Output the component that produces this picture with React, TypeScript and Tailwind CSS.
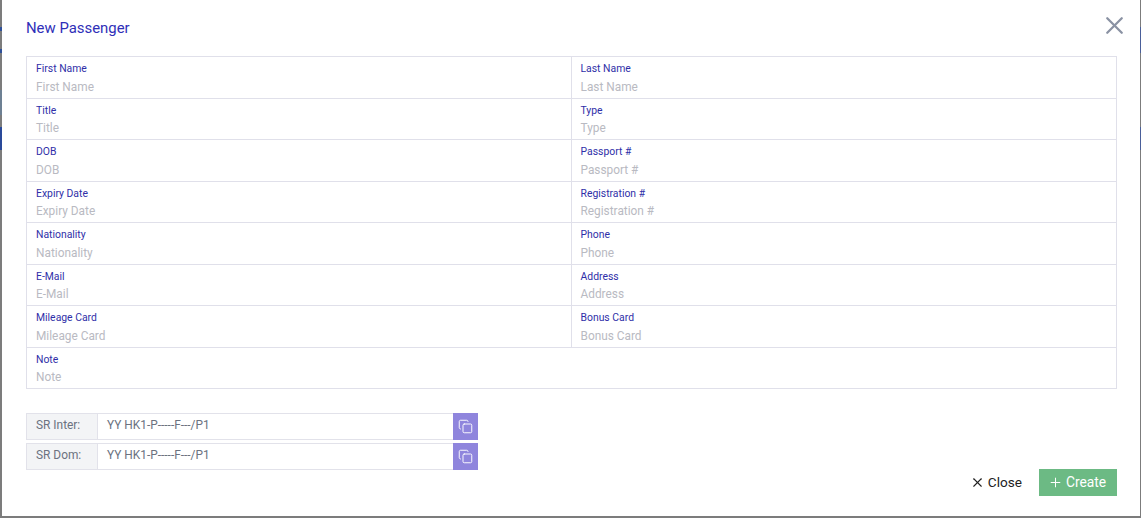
import React from "react";
import { Copy, X, Plus } from "lucide-react";

const rows: [string, string?][] = [
  ["First Name", "Last Name"],
  ["Title", "Type"],
  ["DOB", "Passport #"],
  ["Expiry Date", "Registration #"],
  ["Nationality", "Phone"],
  ["E-Mail", "Address"],
  ["Mileage Card", "Bonus Card"],
  ["Note"],
];

function Cell({ label, last, full }: { label: string; last?: boolean; full?: boolean }) {
  return (
    <div className={`flex h-full flex-col pl-[9px] ${full ? "w-full" : "w-1/2"} ${last ? "" : "border-r border-[#e0e0ea]"}`}>
      <div className="mt-[4px] h-[15px] text-[10.4px] leading-[15px] text-[#2f2fa8]">{label}</div>
      <div className="mt-[1.5px] h-[18px] text-[11.85px] leading-[18px] text-[#b9bac2]">{label}</div>
    </div>
  );
}

function SrRow({ label }: { label: string }) {
  return (
    <div className="flex h-[27px] w-[452px] border border-r-0 border-[#e2e2ea]">
      <div className="flex w-[71px] shrink-0 items-center border-r border-[#e2e2ea] bg-[#f3f4f6] pl-[9px] text-[11.9px] text-[#6b7280]">{label}</div>
      <div className="flex flex-1 items-center bg-white pl-[9px] text-[11.9px] text-[#6b7280]">YY HK1-P-----F---/P1</div>
      <div className="-my-px flex w-[25px] shrink-0 items-center justify-center bg-[#8f85dd] text-white">
        <Copy size={15} strokeWidth={1.5} />
      </div>
    </div>
  );
}

export default function App() {
  return (
    <div className="flex h-[518px] w-[1141px] bg-[#7c7c7c] pb-[2px] font-['Roboto',sans-serif]">
      <div className="flex w-[2px] shrink-0 flex-col">
        <div className="mt-[27px] h-[4px] bg-[#2f5199]" />
        <div className="mt-[18px] h-[4px] bg-[#2f5199]" />
        <div className="mt-[37px] h-[25px] bg-[#6d8093]" />
        <div className="mt-[12px] h-[23px] bg-[#2a4a9a]" />
      </div>
      <div className="flex h-full min-w-0 flex-1 flex-col bg-white pl-[24px] pr-[23px]">
        <div className="flex h-[56px] shrink-0 items-start justify-between">
          <div className="mt-[19px] text-[14.9px] leading-[18px] text-[#2f2fb8]">New Passenger</div>
          <X size={29} strokeWidth={1.9} className="-mr-[12px] mt-[11px] text-[#8a92a3]" />
        </div>
        <div className="border border-[#e0e0ea]">
          {rows.map((r, i) => (
            <div key={i} className={`flex ${i < rows.length - 1 ? "h-[41.5px] border-b border-[#e0e0ea]" : "h-[40.5px]"}`}>
              <Cell label={r[0]} full={!r[1]} last={!r[1]} />
              {r[1] && <Cell label={r[1]} last />}
            </div>
          ))}
        </div>
        <div className="mt-[23.5px] flex flex-col gap-[3px]">
          <SrRow label="SR Inter:" />
          <SrRow label="SR Dom:" />
        </div>
        <div className="-mt-[0.5px] flex items-center justify-end gap-[17px]">
          <div className="flex items-center gap-[3px] text-[13.6px] text-[#222222]">
            <X size={15} strokeWidth={1.8} />
            Close
          </div>
          <div className="flex h-[27px] w-[78px] items-center justify-center gap-[3px] pr-[2px] bg-[#6cba84] text-[13.8px] text-white">
            <Plus size={15} strokeWidth={1.6} />
            Create
          </div>
        </div>
      </div>
      <div className="flex w-px shrink-0 flex-col">
        <div className="mt-[27px] h-[26px] bg-[#4a5f9a]" />
        <div className="mt-[74px] h-[23px] bg-[#4a5f9a]" />
      </div>
    </div>
  );
}
